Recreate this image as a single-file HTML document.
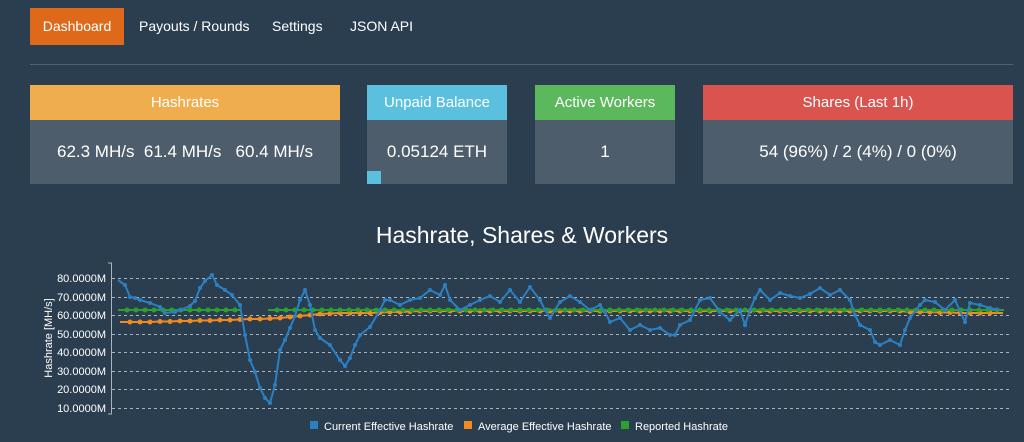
<!DOCTYPE html>
<html><head><meta charset="utf-8"><style>
body{margin:0;width:1024px;height:442px;background:#2b3e50;font-family:"Liberation Sans",sans-serif;overflow:hidden;position:relative;color:#fff}
.nav a{position:absolute;top:8px;height:37px;line-height:37px;font-size:14px;color:#fff;text-decoration:none}
.hr{position:absolute;left:30px;top:64px;width:983px;height:1px;background:#4e6274}
.card{position:absolute;top:85px;height:99px;background:#4e5d6c}
.card .h{height:35px;line-height:35px;text-align:center;font-size:15px}
.card .b{height:64px;line-height:64px;text-align:center;font-size:17px}
</style></head><body>
<div class="nav">
<a style="left:30px;width:94px;background:#df691a;text-align:center">Dashboard</a>
<a style="left:139px">Payouts / Rounds</a>
<a style="left:272px">Settings</a>
<a style="left:350px">JSON API</a>
</div>
<div class="hr"></div>
<div class="card" style="left:30px;width:310px"><div class="h" style="background:#f0ad4e">Hashrates</div><div class="b">62.3 MH/s&nbsp; 61.4 MH/s&nbsp;&nbsp; 60.4 MH/s</div></div>
<div class="card" style="left:367px;width:140px"><div class="h" style="background:#5bc0de">Unpaid Balance</div><div class="b">0.05124 ETH</div><div style="position:absolute;left:0;top:86px;width:14px;height:13px;background:#5bc0de"></div></div>
<div class="card" style="left:535px;width:140px"><div class="h" style="background:#5cb85c">Active Workers</div><div class="b">1</div></div>
<div class="card" style="left:703px;width:310px"><div class="h" style="background:#d9534f">Shares (Last 1h)</div><div class="b">54 (96%) / 2 (4%) / 0 (0%)</div></div>
<div style="position:absolute;top:222px;left:0;width:1044px;text-align:center;font-size:23px">Hashrate, Shares &amp; Workers</div>
<svg width="1024" height="442" style="position:absolute;left:0;top:0" font-family="Liberation Sans,sans-serif">
<defs>
<marker id="mb" markerWidth="4" markerHeight="4" refX="2" refY="2" markerUnits="userSpaceOnUse"><circle cx="2" cy="2" r="2" fill="#2c7fc0"/></marker>
<marker id="mo" markerWidth="5" markerHeight="5" refX="2.5" refY="2.5" markerUnits="userSpaceOnUse"><circle cx="2.5" cy="2.5" r="2.5" fill="#f28a1e"/></marker>
<marker id="mg" markerWidth="5" markerHeight="5" refX="2.5" refY="2.5" markerUnits="userSpaceOnUse"><circle cx="2.5" cy="2.5" r="2.5" fill="#2ca02c"/></marker>
</defs>
<g stroke="#aab4bd" stroke-dasharray="3,3" stroke-width="1">
<line x1="112" x2="1012" y1="278.5" y2="278.5"/><line x1="112" x2="1012" y1="297.5" y2="297.5"/><line x1="112" x2="1012" y1="315.5" y2="315.5"/><line x1="112" x2="1012" y1="334.5" y2="334.5"/><line x1="112" x2="1012" y1="352.5" y2="352.5"/><line x1="112" x2="1012" y1="371.5" y2="371.5"/><line x1="112" x2="1012" y1="389.5" y2="389.5"/><line x1="112" x2="1012" y1="408.5" y2="408.5"/>
</g>
<path d="M108 263H111.5V414H108" fill="none" stroke="#aab4bd"/>
<g fill="#fff" font-size="11" text-anchor="end">
<text x="106" y="282">80.0000M</text><text x="106" y="301">70.0000M</text><text x="106" y="319">60.0000M</text><text x="106" y="338">50.0000M</text><text x="106" y="356">40.0000M</text><text x="106" y="375">30.0000M</text><text x="106" y="393">20.0000M</text><text x="106" y="412">10.0000M</text>
</g>
<text transform="translate(52,338) rotate(-90)" fill="#fff" font-size="11" text-anchor="middle">Hashrate [MH/s]</text>
<polyline fill="none" stroke="#f28a1e" stroke-width="2" marker-mid="url(#mo)" points="120,322 130,322 140,322 150,322 160,321.5 170,321.5 180,321 190,321 200,320.5 210,320.5 220,320 230,320 240,319.5 250,319 260,319 270,318.5 280,318 290,317 300,316 310,315 320,314 330,313.5 340,313 350,313 360,313 370,313 380,312.5 390,312 400,312 410,311.5 420,311 430,311 440,311 450,311 460,311 470,311 480,311 490,311 500,311 510,311 520,311 530,311 540,311 550,311 560,311 570,311 580,311 590,311 600,311 610,311 620,311 630,311 640,311 650,311 660,311 670,311 680,311 690,311 700,311 710,311 720,311 730,311 740,311 750,311 760,311 770,311 780,311 790,311 800,311 810,311 820,311 830,311 840,311 850,311 860,311 870,311 880,311 890,311 900,311 910,312 920,312 930,312 940,312.5 950,312.5 960,313 970,313 980,313 990,313 1003,313"/>
<polyline fill="none" stroke="#2ca02c" stroke-width="2" marker-mid="url(#mg)" points="118,310 127,310 136,310 145,310 154,310 163,310 172,310 181,310 190,310 199,310 208,310 217,310 226,310 235,310 241,310"/>
<polyline fill="none" stroke="#2ca02c" stroke-width="2" marker-mid="url(#mg)" points="268,310 277,310 286,310 295,310 304,310 313,310 322,310 331,310 340,310 349,310 358,310 367,310 376,310 385,310 394,310 403,310 412,310 421,310 430,310 439,310 448,310 457,310 466,310 475,310 484,310 493,310 502,310 511,310 520,310 529,310 538,310 547,310 556,310 565,310 574,310 583,310 592,310 601,310 610,310 619,310 628,310 637,310 646,310 655,310 664,310 673,310 682,310 691,310 700,310 709,310 718,310 727,310 736,310 745,310 754,310 763,310 772,310 781,310 790,310 799,310 808,310 817,310 826,310 835,310 844,310 853,310 862,310 871,310 880,310 889,310 898,310 907,310 916,310 925,310 934,310 943,310 952,310 961,310 970,310 979,310 988,310 997,310 1004,310"/>
<polyline fill="none" stroke="#2c7fc0" stroke-width="2" marker-mid="url(#mb)" points="118,280 125,285 130,297 135,298 140,300 150,303 160,307 165,313 175,312 180,310 190,306 195,301 200,288 205,281 212,275 217,285 225,290 232,295 240,305 245,335 250,360 255,372 260,388 265,398 270,403 275,385 280,350 285,340 290,328 295,316 300,300 305,290 310,305 315,330 320,338 330,345 340,360 345,366 350,358 355,345 360,335 370,327 380,310 385,300 390,300 400,305 410,300 420,298 430,290 440,295 445,285 450,300 460,310 470,305 480,300 490,296 500,302 510,290 520,302 530,287 540,300 545,310 550,318 560,302 570,296 580,302 590,310 600,305 605,312 610,322 620,318 630,330 640,325 650,330 660,328 670,335 675,335 680,325 690,320 700,300 710,298 720,312 730,320 740,310 745,325 750,310 755,298 760,290 770,300 780,293 790,296 800,298 810,294 820,288 830,295 840,290 850,300 855,315 860,325 870,330 875,342 880,345 890,340 900,345 905,330 910,318 920,305 925,300 935,302 945,310 955,300 965,322 970,303 980,305 990,308 1000,310"/>
<g font-size="11" fill="#fff">
<rect x="310" y="421" width="8" height="8" fill="#2c7fc0"/><text x="324" y="430">Current Effective Hashrate</text>
<rect x="464" y="421" width="8" height="8" fill="#f28a1e"/><text x="478" y="430">Average Effective Hashrate</text>
<rect x="621" y="421" width="8" height="8" fill="#2ca02c"/><text x="635" y="430">Reported Hashrate</text>
</g>
</svg>
</body></html>
